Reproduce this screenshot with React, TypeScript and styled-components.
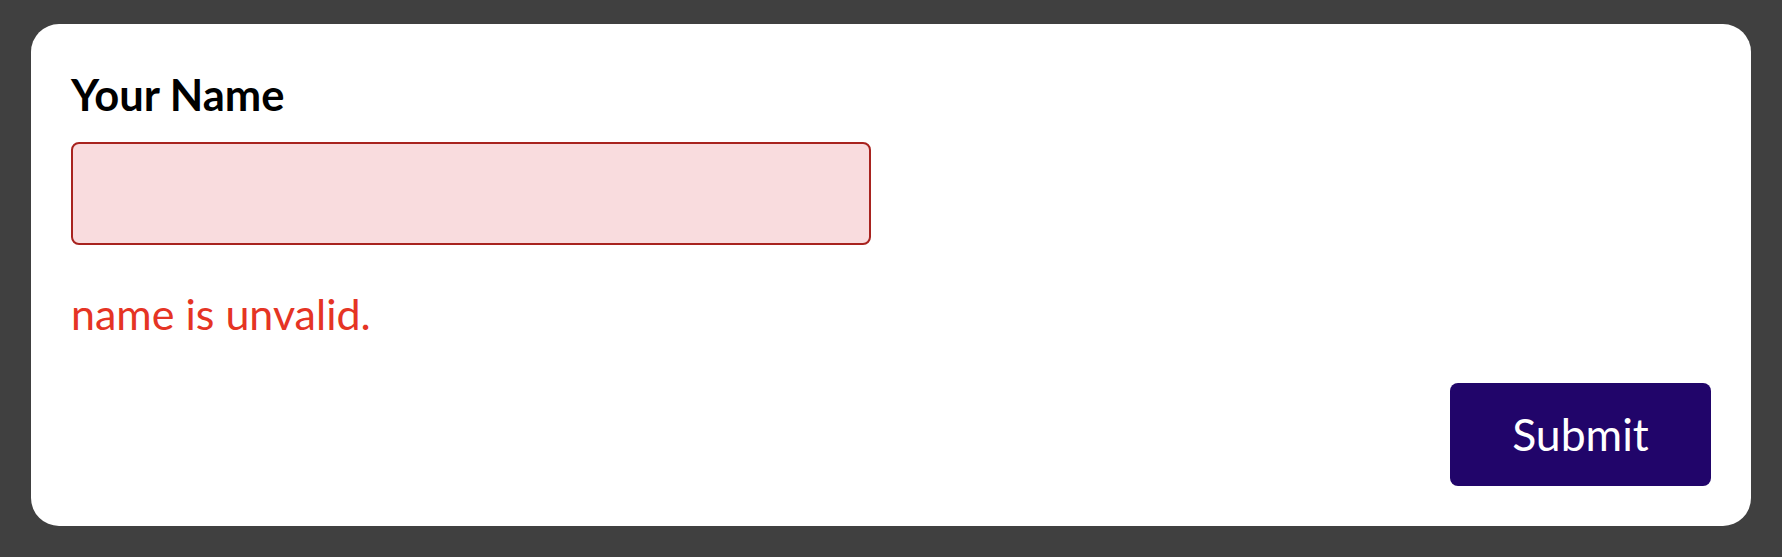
import styled, { createGlobalStyle } from 'styled-components';

const GlobalStyle = createGlobalStyle`
    html, body {
        margin: 0;
        padding: 0;
        background: #404040;
    }
    body {
        font-family: Lato, 'Noto Sans', sans-serif;
    }
`;

const Page = styled.div`
    padding: 24px 31px 31px 31px;
    box-sizing: border-box;
    min-height: 557px;
`;

const Card = styled.form`
    background: #ffffff;
    border-radius: 28px;
    padding: 46px 40px 40px 40px;
    display: flex;
    flex-direction: column;
`;

const Label = styled.label`
    font-size: 43.5px;
    line-height: 48px;
    font-weight: 700;
    color: #000000;
`;

const NameInput = styled.input<{ $invalid?: boolean }>`
    box-sizing: border-box;
    margin-top: 24px;
    width: 800px;
    height: 103px;
    border-radius: 8px;
    border: 2px solid ${(p) => (p.$invalid ? '#a8231f' : '#999')};
    background: ${(p) => (p.$invalid ? '#f9dcde' : '#fff')};
    font-family: inherit;
    font-size: 40px;
    padding: 0 20px;
    outline: none;
`;

const ErrorText = styled.div`
    margin-top: 45px;
    font-size: 43px;
    line-height: 48px;
    color: #e53424;
`;

const Footer = styled.div`
    display: flex;
    justify-content: flex-end;
    margin-top: 45px;
`;

const SubmitButton = styled.button`
    width: 261px;
    height: 103px;
    border: none;
    border-radius: 8px;
    background: #21056a;
    color: #ffffff;
    font-family: inherit;
    font-size: 44.5px;
    display: flex;
    align-items: center;
    justify-content: center;
    padding: 0 0 2px 0;
    cursor: pointer;
`;

const App = () => {
    return (
        <>
            <GlobalStyle />
            <Page>
                <Card onSubmit={(e) => e.preventDefault()}>
                    <Label htmlFor='name'>Your Name</Label>
                    <NameInput id='name' type='text' $invalid />
                    <ErrorText>name is unvalid.</ErrorText>
                    <Footer>
                        <SubmitButton type='submit'>Submit</SubmitButton>
                    </Footer>
                </Card>
            </Page>
        </>
    );
};

export default App;
